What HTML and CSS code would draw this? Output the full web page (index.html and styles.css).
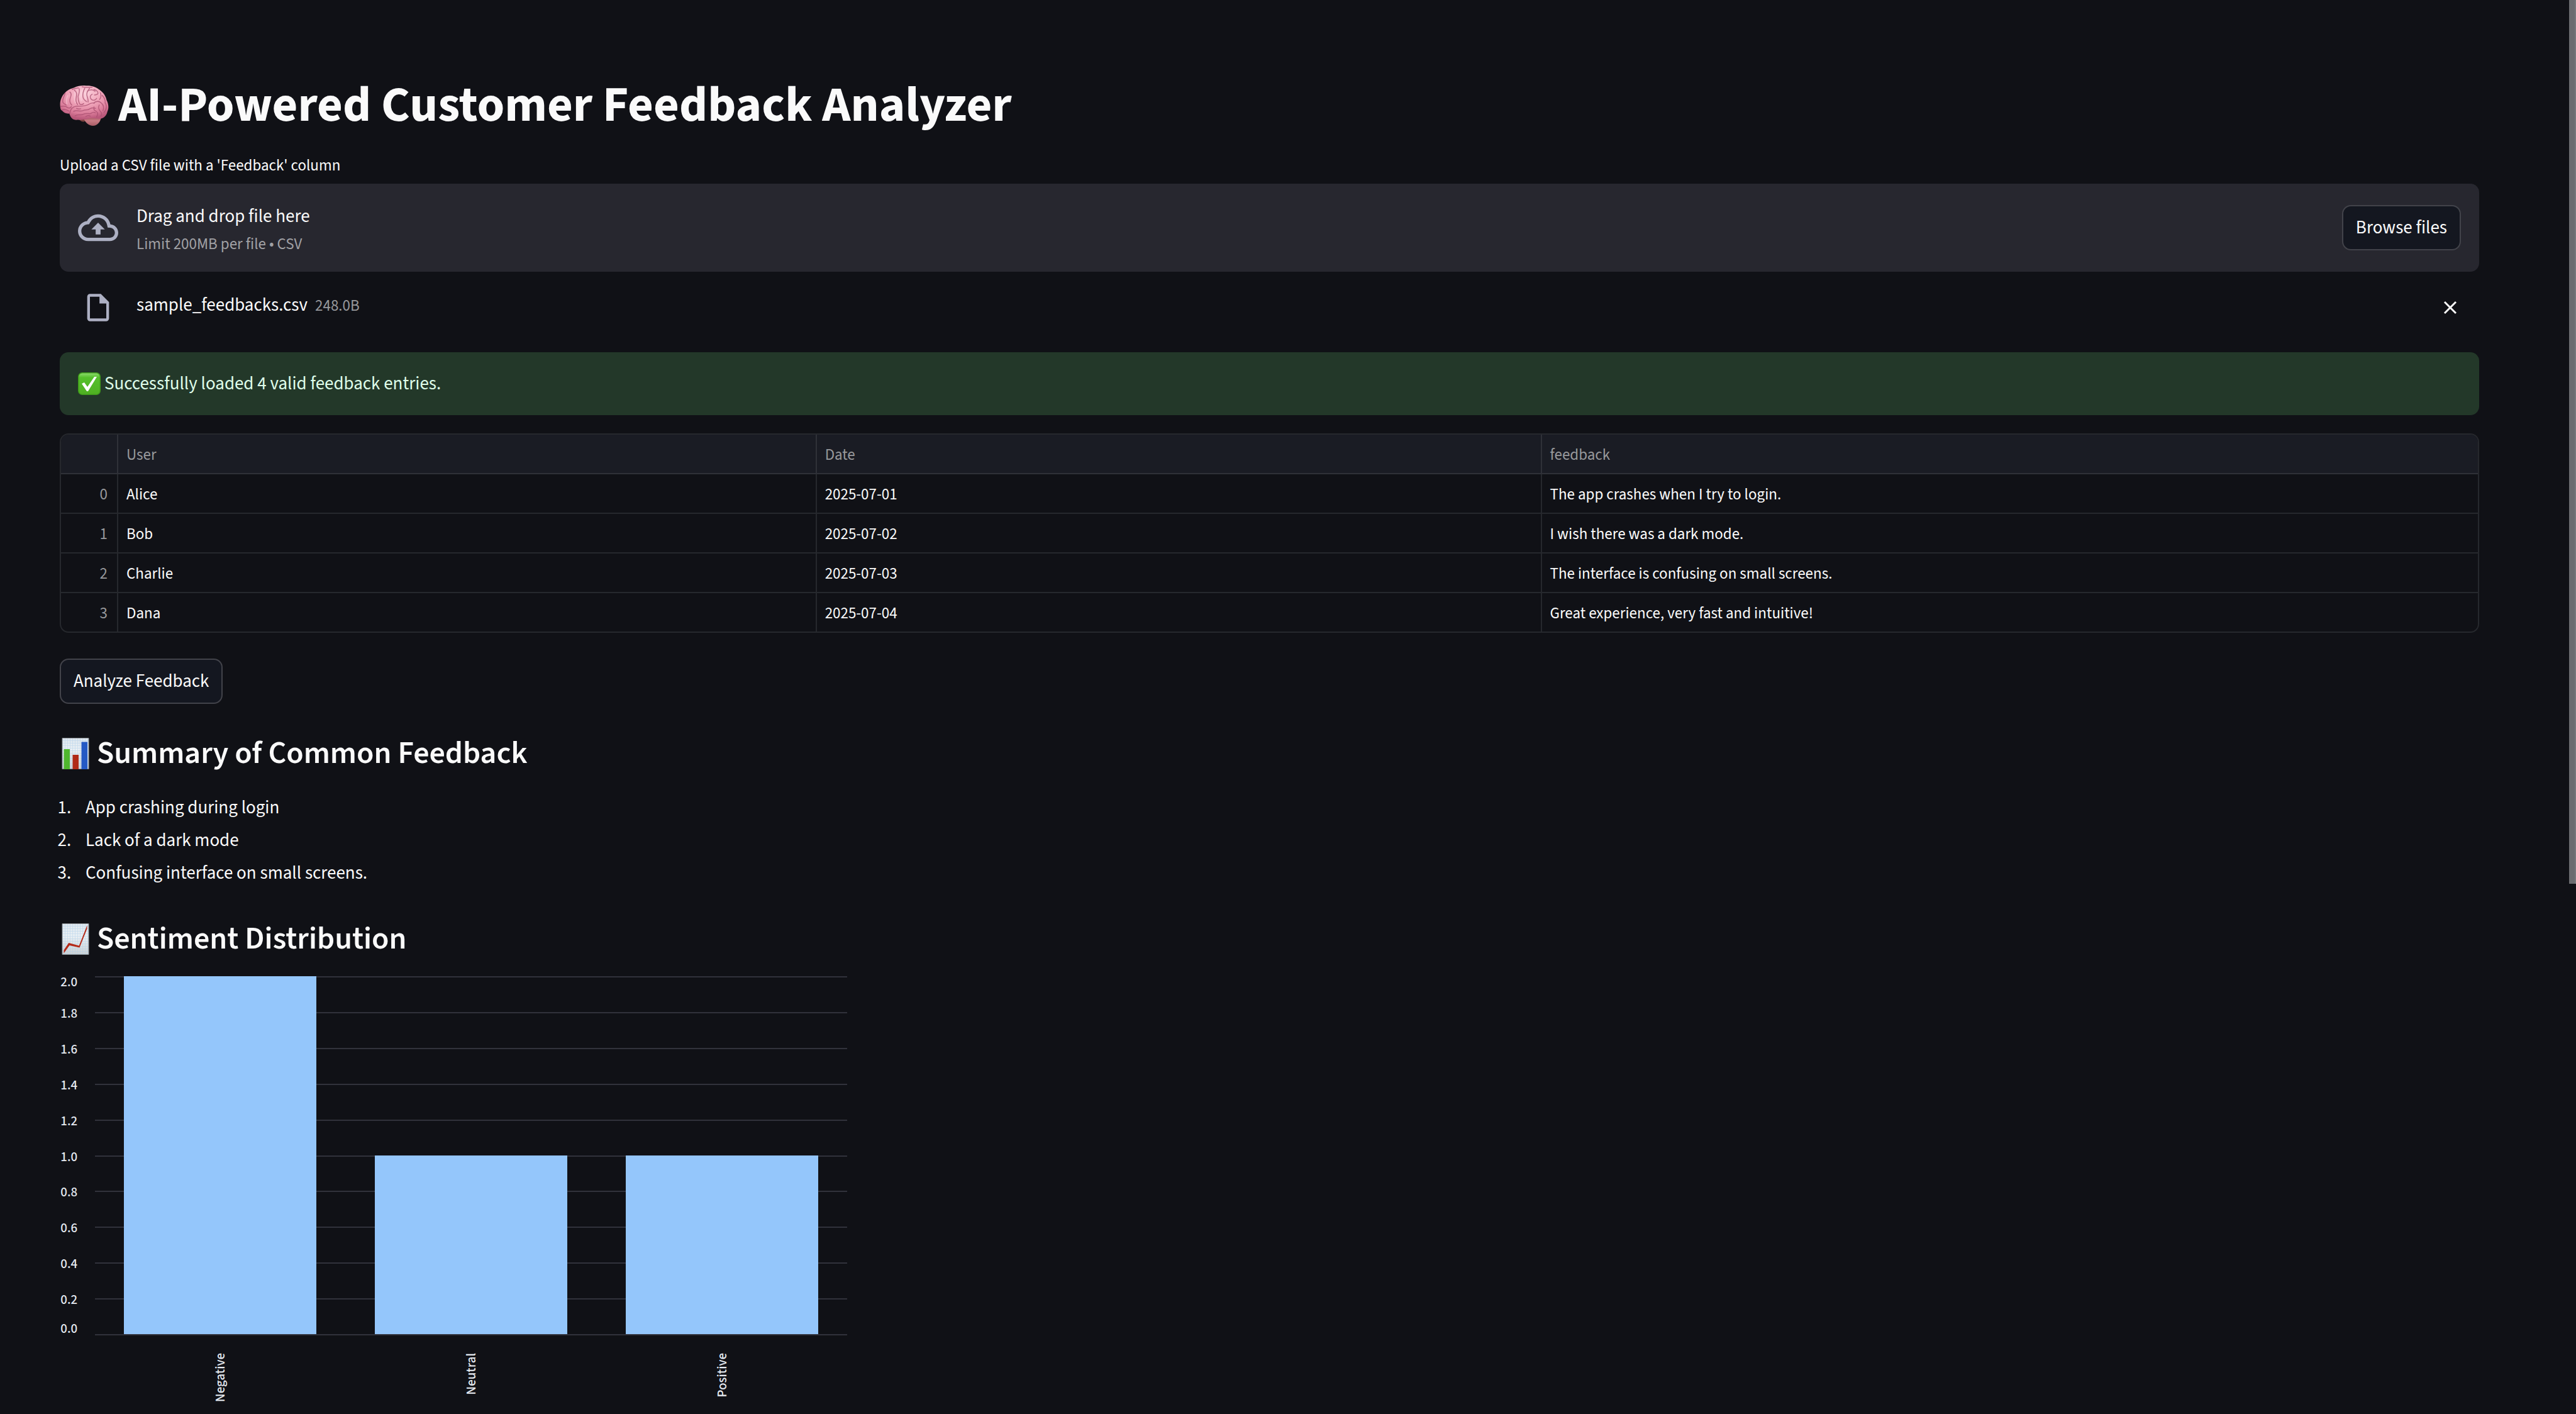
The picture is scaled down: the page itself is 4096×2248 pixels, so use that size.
FILE: index.html
```html
<!DOCTYPE html>
<html lang="en">
<head>
<meta charset="utf-8">
<meta name="viewport" content="width=device-width, initial-scale=1">
<title>AI-Powered Customer Feedback Analyzer</title>
<link rel="stylesheet" href="styles.css">
</head>
<body>
<main class="page">
  <h1 class="title">
    <svg class="title-icon" viewBox="30 37 263 217" aria-hidden="true">
      <defs>
        <radialGradient id="brain-fill" cx="0.52" cy="0.22" r="0.75">
          <stop offset="0" stop-color="#fbd0dc"/>
          <stop offset="0.45" stop-color="#f0a5ba"/>
          <stop offset="0.8" stop-color="#d97a98"/>
          <stop offset="1" stop-color="#b9587a"/>
        </radialGradient>
        <linearGradient id="stem-fill" x1="0" y1="0" x2="0" y2="1">
          <stop offset="0" stop-color="#8e4650"/>
          <stop offset="0.5" stop-color="#c97c84"/>
          <stop offset="1" stop-color="#a85c66"/>
        </linearGradient>
      </defs>
      <path d="M136 222c8 10 18 12 26 9l12-14-30-2z" fill="#7d4440"/>
      <path d="M158 214c8 22 28 40 50 40 24 0 38-18 44-42l-40-14z" fill="url(#stem-fill)"/>
      <path d="M33 158C27 128 36 98 56 78c12-16 32-24 52-30 18-9 42-12 62-10 28-2 56 6 76 24 20 14 32 34 36 54 12 22 12 46 4 62-4 20-18 36-38 38-20 2-38-6-58-2-22 6-44 10-66 8-22 2-38-10-42-34-18 2-32-6-38-14-6-4-11-8-11-16z" fill="url(#brain-fill)"/>
      <g fill="none" stroke="#fde0e8" stroke-width="8" stroke-linecap="round" opacity="0.35">
        <path d="M112 72c-6 22-2 42 2 56M150 62c-10 20-8 40-4 56M190 60c-14 14-20 30-22 48M72 92c-8 16-8 28-4 44M222 66c10 4 18 10 24 20"/>
      </g>
      <g fill="none" stroke="#a94f70" stroke-width="5" stroke-linecap="round" opacity="0.75">
        <path d="M58 78c-4 18-16 30-12 50 6 8 12 10 18 14"/>
        <path d="M84 72c12 8 6 20 2 32s-6 24 8 38"/>
        <path d="M108 62c16 10 14 24 10 40s0 28 8 38"/>
        <path d="M134 54c4 16-2 28-6 42 0 14 2 26 8 40 8 6 16 4 22-2"/>
        <path d="M164 52c-8 16-12 28-10 44s10 22 20 28"/>
        <path d="M190 52c-10 12-18 24-14 40s8 18 6 34"/>
        <path d="M178 68c14-10 30-10 42 0M204 84c-12 6-14 18-4 28M200 112c10 8 22 4 28-6M214 58c12 4 22 10 22 22-6 8-14 8-20 8M248 76c6 14 4 26-4 36M258 90c14 14 18 26 16 42"/>
        <path d="M82 190c4-26 16-40 38-42 24 0 44 2 62-8 12-8 22-12 34-8M210 132c18-14 34-12 46 2 10 10 12 24 6 38"/>
        <path d="M104 176c18-10 34 4 50-4 16-6 26 0 38-10 12-6 20-6 30-2M112 200c16-12 30 0 44-8s28-2 40-4c12-8 16-8 26-4"/>
        <path d="M214 152c-4 12 2 20 12 24 10 8 10 18 2 30M242 142c-6 12-2 26 6 34s8 18 2 26M276 132c8 18 4 36-8 50"/>
        <path d="M36 150c16-4 26-2 36 6 10 4 16 2 20-6M44 168c12-6 24 0 34 6M120 160c8 4 14 4 22 2M170 204c8-6 16-6 24-2"/>
        <path d="M150 44c16 4 34 4 54 2M96 58c10-4 22-6 34-8"/>
      </g>
    </svg>
    AI-Powered Customer Feedback Analyzer
  </h1>

  <section class="upload">
    <label class="upload-label" for="browse">Upload a CSV file with a 'Feedback' column</label>
    <div class="dropzone">
      <svg class="cloud" viewBox="0 0 24 24" aria-hidden="true"><path fill="currentColor" d="M19.35 10.04A7.49 7.49 0 0012 4C9.11 4 6.6 5.64 5.35 8.04A5.994 5.994 0 000 14c0 3.31 2.69 6 6 6h13c2.76 0 5-2.24 5-5 0-2.64-2.05-4.78-4.65-4.96zM19 18H6c-2.21 0-4-1.79-4-4 0-2.05 1.53-3.76 3.56-3.97l1.07-.11.5-.95A5.469 5.469 0 0112 6c2.62 0 4.88 1.86 5.39 4.43l.3 1.5 1.53.11A2.98 2.98 0 0122 15c0 1.65-1.35 3-3 3zM8 13h2.55v3h2.9v-3H16l-4-4-4 4z"/></svg>
      <div class="drop-text">
        <div class="drop-main">Drag and drop file here</div>
        <div class="drop-limit">Limit 200MB per file • CSV</div>
      </div>
      <button class="button" id="browse" type="button">Browse files</button>
    </div>
    <div class="file">
      <div class="file-icon">
        <svg viewBox="0 0 24 24" aria-hidden="true"><path fill="currentColor" d="M14 2H6c-1.1 0-1.99.9-1.99 2L4 20c0 1.1.89 2 1.99 2H18c1.1 0 2-.9 2-2V8l-6-6zM6 20V4h7v5h5v11H6z"/></svg>
      </div>
      <div class="file-text">
        <span>sample_feedbacks.csv</span>
        <span class="file-size">248.0B</span>
      </div>
      <button class="close" type="button" aria-label="Remove file">
        <svg viewBox="0 0 22 22" aria-hidden="true"><path d="M2 2l18 18M20 2L2 20" fill="none" stroke="currentColor" stroke-width="3"/></svg>
      </button>
    </div>
  </section>

  <div class="alert" role="status">
    <svg class="check" viewBox="0 0 36 36" aria-hidden="true">
      <defs>
        <linearGradient id="check-fill" x1="0" y1="0" x2="0" y2="1">
          <stop offset="0" stop-color="#8fdc70"/>
          <stop offset="0.22" stop-color="#55c02b"/>
          <stop offset="1" stop-color="#4fb022"/>
        </linearGradient>
      </defs>
      <rect x="0.75" y="0.75" width="34.5" height="34.5" rx="6" fill="url(#check-fill)" stroke="#3f9a1b" stroke-width="1.5"/>
      <path d="M6 18l4-2 5 7L26 7h4L16 30h-2z" fill="#fff"/>
    </svg>
    Successfully loaded 4 valid feedback entries.
  </div>

  <div class="table-frame">
    <table class="data">
      <colgroup><col class="col-index"><col class="col-user"><col class="col-date"><col></colgroup>
      <thead>
        <tr><th></th><th scope="col">User</th><th scope="col">Date</th><th scope="col">feedback</th></tr>
      </thead>
      <tbody>
        <tr><th scope="row">0</th><td>Alice</td><td>2025-07-01</td><td>The app crashes when I try to login.</td></tr>
        <tr><th scope="row">1</th><td>Bob</td><td>2025-07-02</td><td>I wish there was a dark mode.</td></tr>
        <tr><th scope="row">2</th><td>Charlie</td><td>2025-07-03</td><td>The interface is confusing on small screens.</td></tr>
        <tr><th scope="row">3</th><td>Dana</td><td>2025-07-04</td><td>Great experience, very fast and intuitive!</td></tr>
      </tbody>
    </table>
  </div>

  <button class="button analyze" type="button">Analyze Feedback</button>

  <h2 class="heading">
    <svg class="heading-icon" viewBox="0 0 50 50" aria-hidden="true">
      <defs>
        <linearGradient id="paper" x1="0" y1="0" x2="0" y2="1">
          <stop offset="0" stop-color="#dfe7ef"/>
          <stop offset="0.4" stop-color="#eaf0f4"/>
          <stop offset="1" stop-color="#ccd1d3"/>
        </linearGradient>
        <pattern id="graph" width="4" height="4" patternUnits="userSpaceOnUse">
          <path d="M0 .5h4M.5 0v4" stroke="#a9cdea" stroke-width="0.7" opacity="0.6"/>
        </pattern>
      </defs>
      <path d="M4 .5h42v49H4z" fill="url(#paper)"/>
      <path d="M4 .5h42v49H4z" fill="url(#graph)" stroke="#8d9194"/>
      <path d="M6.500 18h9.500v32H6.500z" fill="#4fb72e"/>
      <path d="M20.500 27h9.500v23h-9.500z" fill="#b02a18"/>
      <path d="M34.500 6.500h9.500V50h-9.500z" fill="#2459c4"/>
    </svg>
    Summary of Common Feedback
  </h2>

  <ol class="summary">
    <li>App crashing during login</li>
    <li>Lack of a dark mode</li>
    <li>Confusing interface on small screens.</li>
  </ol>

  <h2 class="heading">
    <svg class="heading-icon" viewBox="0 0 50 50" aria-hidden="true">
      <path d="M4 .5h42v49H4z" fill="url(#paper)"/>
      <path d="M4 .5h42v49H4z" fill="url(#graph)" stroke="#8d9194"/>
      <path d="M6.500 42.500L14.300 31l16.400 4.500L43.500 3v5.500L31.500 38.500 15.500 35 6.500 47.500z" fill="#b52a18"/>
    </svg>
    Sentiment Distribution
  </h2>

  <svg class="chart" viewBox="0 0 1260 700" role="img" aria-label="Feedback entries by sentiment">
    <g class="grid">
      <path d="M56 12h1196M56 69h1196M56 126h1196M56 183h1196M56 240h1196M56 297h1196M56 353h1196M56 410h1196M56 467h1196M56 524h1196M56 581h1196"/>
    </g>
    <g class="bars">
      <rect x="102" y="11" width="306" height="569"/>
      <rect x="501" y="296" width="306" height="284"/>
      <rect x="900" y="296" width="306" height="284"/>
    </g>
    <g class="ticks">
      <text x="28" y="27">2.0</text>
      <text x="28" y="77">1.8</text>
      <text x="28" y="134">1.6</text>
      <text x="28" y="191">1.4</text>
      <text x="28" y="248">1.2</text>
      <text x="28" y="305">1.0</text>
      <text x="28" y="361">0.8</text>
      <text x="28" y="418">0.6</text>
      <text x="28" y="475">0.4</text>
      <text x="28" y="532">0.2</text>
      <text x="28" y="578">0.0</text>
      <text transform="translate(262 610) rotate(-90)">Negative</text>
      <text transform="translate(661 610) rotate(-90)">Neutral</text>
      <text transform="translate(1060 610) rotate(-90)">Positive</text>
    </g>
  </svg>
</main>
<div class="scroll-thumb" aria-hidden="true"></div>
</body>
</html>
```
FILE: styles.css
```css
* {
  box-sizing: border-box;
}

body {
  margin: 0;
  background: #101116;
  color: #fafafa;
  font-family: "Source Sans Pro", "Source Sans 3", "Noto Sans CJK SC", sans-serif;
  font-size: 29px;
  line-height: 48px;
}

svg {
  display: block;
  flex: none;
}

.page {
  display: flex;
  flex-direction: column;
  padding: 120px 154px 0 95px;
}

.title {
  display: flex;
  align-items: center;
  gap: 15px;
  margin: 0 0 31px;
  font-size: 79px;
  font-weight: 700;
  line-height: 96px;
}

.title-icon {
  width: 78px;
  height: 64px;
}

.upload-label {
  display: block;
  margin-bottom: 13px;
  font-size: 25px;
  line-height: 32px;
}

.dropzone {
  display: flex;
  align-items: center;
  gap: 29px;
  padding: 24px 29px;
  border-radius: 14px;
  background: #27272f;
}

.cloud {
  width: 64px;
  height: 64px;
  color: #adb0c3;
}

.drop-text {
  flex: 1;
  padding-top: 4px;
}

.drop-limit {
  color: #a0a0a4;
  font-size: 25px;
  line-height: 40px;
}

.button {
  height: 72px;
  padding: 0 20px;
  border: 2px solid #42434a;
  border-radius: 14px;
  background: #141720;
  color: inherit;
  font: inherit;
}

.file {
  display: flex;
  align-items: center;
  gap: 29px;
  height: 56px;
  margin: 29px 0 43px;
  padding: 0 29px;
}

.file-icon {
  display: flex;
  justify-content: center;
  width: 64px;
  color: #adb0c3;
}

.file-icon svg {
  width: 52px;
  height: 52px;
}

.file-text {
  display: flex;
  flex: 1;
  align-items: baseline;
  gap: 12px;
  padding-bottom: 8px;
}

.file-size {
  color: #97989b;
  font-size: 25px;
}

.close {
  display: flex;
  align-items: center;
  justify-content: center;
  width: 34px;
  height: 34px;
  padding: 0;
  border: 0;
  background: none;
  color: inherit;
}

.close svg {
  width: 22px;
  height: 22px;
}

.alert {
  display: flex;
  align-items: center;
  gap: 6px;
  padding: 26px 29px;
  border-radius: 14px;
  background: #233829;
  color: #dffde9;
}

.check {
  width: 36px;
  height: 36px;
}

.table-frame {
  margin: 29px 0 41px;
  overflow: hidden;
  border: 2px solid #26282d;
  border-radius: 14px;
}

.data {
  width: 100%;
  border-spacing: 0;
  table-layout: fixed;
  font-size: 25px;
  line-height: 32px;
}

.col-index {
  width: 91px;
}

.col-user {
  width: 28.9%;
}

.col-date {
  width: 30%;
}

.data th,
.data td {
  height: 63px;
  padding: 2px 13px 0;
  border-right: 2px solid #26282d;
  border-bottom: 2px solid #26282d;
  text-align: left;
  font-weight: 400;
}

.data th {
  color: #97989b;
}

.data thead th {
  border-color: #2f3138;
  background: #1a1c24;
}

.data tbody th {
  padding-right: 15px;
  text-align: right;
}

.data th:last-child,
.data td:last-child {
  border-right: 0;
}

.data tbody tr:last-child > * {
  height: 61px;
  border-bottom: 0;
}

.analyze {
  align-self: flex-start;
}

.heading {
  display: flex;
  align-items: center;
  gap: 9px;
  margin: 49px 0 0;
  font-size: 50px;
  font-weight: 600;
  line-height: 60px;
}

.heading-icon {
  width: 50px;
  height: 50px;
}

.summary {
  margin: 30px 0 0;
  padding-left: 24px;
  line-height: 52px;
}

.summary li {
  padding-left: 17px;
}

.chart {
  width: 1260px;
  height: 700px;
  margin-top: 18px;
}

.grid {
  fill: none;
  stroke: #31323b;
  stroke-width: 2px;
}

.bars {
  fill: #94c6fb;
}

.ticks {
  fill: #e6eaf1;
  font-size: 21px;
  font-weight: 500;
  text-anchor: end;
}

/* thumb of the overlay scrollbar */
.scroll-thumb {
  position: fixed;
  top: 0;
  right: 0;
  width: 11px;
  height: 62.5vh;
  border-right: 2px solid #77787c;
  background: #6b6c70;
}
```
